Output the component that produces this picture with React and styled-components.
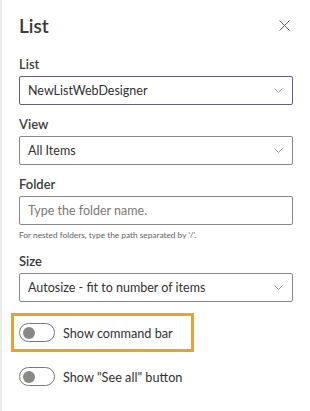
import React from "react";
import styled, { createGlobalStyle } from "styled-components";

const GlobalStyle = createGlobalStyle`
    html, body {
        margin: 0;
        padding: 0;
        background: #ffffff;
    }
    body {
        font-family: Lato, "Open Sans", sans-serif;
        color: #323130;
    }
`

const Panel = styled.aside`
    box-sizing: border-box;
    width: 310px;
    height: 411px;
    border-left: 2px solid #ececec;
    padding: 10px 17px 0 17px;
    display: flex;
    flex-direction: column;
`

const Header = styled.header`
    display: flex;
    align-items: center;
    justify-content: space-between;
    height: 30px;
    margin-bottom: 14px;
`

const Title = styled.h1`
    margin: 0;
    font-size: 19px;
    font-weight: 600;
    color: #3b3a39;
`

const CloseButton = styled.button`
    display: flex;
    align-items: center;
    justify-content: center;
    width: 24px;
    height: 24px;
    margin-right: -3px;
    padding: 0;
    border: none;
    background: none;
`

const Field = styled.div`
    display: flex;
    flex-direction: column;
    margin-bottom: 9px;
`

const Label = styled.label`
    font-size: 13px;
    font-weight: 600;
    line-height: 20px;
    margin-bottom: 2px;
    color: #3b3a39;
`

const Box = styled.div`
    box-sizing: border-box;
    height: 29px;
    display: flex;
    align-items: center;
    justify-content: space-between;
    padding: 0 9px 0 8px;
    border: 1px solid ${({ active }) => (active ? "#625f80" : "#8a8886")};
    border-radius: 2px;
    font-size: 12.5px;
    color: ${({ placeholder }) => (placeholder ? "#7a7876" : "#323130")};
`

const Hint = styled.span`
    margin-top: 4px;
    font-size: 8.3px;
    line-height: 13px;
    color: #605e5c;
`

const ToggleRow = styled.div`
    box-sizing: border-box;
    display: flex;
    align-items: center;
    gap: 8px;
    width: ${({ highlight }) => (highlight ? "183px" : "auto")};
    height: 39px;
    margin: ${({ highlight }) => (highlight ? "2px 0 0 -8px" : "5px 0 0 -8px")};
    padding-left: 5px;
    border: 3px solid ${({ highlight }) => (highlight ? "#e8a232" : "transparent")};
    font-size: 12.7px;
    color: #323130;
`

const Switch = styled.span`
    box-sizing: border-box;
    display: flex;
    align-items: center;
    width: 36px;
    height: 19px;
    padding: 0 3px;
    border: 1px solid #7a7876;
    border-radius: 10px;

    &::after {
        content: "";
        width: 12px;
        height: 12px;
        border-radius: 50%;
        background: #8a8886;
    }
`

function Chevron() {
    return (
        <svg width="9" height="5" viewBox="0 0 9 5">
            <path d="M0.5 0.5l4 4 4-4" fill="none" stroke="#a19f9d" strokeWidth="1" />
        </svg>
    )
}

function App() {
    return (
        <>
            <GlobalStyle />
            <Panel>
                <Header>
                    <Title>List</Title>
                    <CloseButton aria-label="Close">
                        <svg width="11" height="11" viewBox="0 0 11 11">
                            <path d="M0.5 0.5l10 10M10.5 0.5l-10 10" stroke="#605e5c" strokeWidth="1" />
                        </svg>
                    </CloseButton>
                </Header>

                <Field>
                    <Label>List</Label>
                    <Box active>
                        NewListWebDesigner
                        <Chevron />
                    </Box>
                </Field>

                <Field>
                    <Label>View</Label>
                    <Box>
                        All Items
                        <Chevron />
                    </Box>
                </Field>

                <Field>
                    <Label>Folder</Label>
                    <Box placeholder>Type the folder name.</Box>
                    <Hint>For nested folders, type the path separated by '/'.</Hint>
                </Field>

                <Field>
                    <Label>Size</Label>
                    <Box>
                        Autosize - fit to number of items
                        <Chevron />
                    </Box>
                </Field>

                <ToggleRow highlight>
                    <Switch />
                    Show command bar
                </ToggleRow>

                <ToggleRow>
                    <Switch />
                    Show "See all" button
                </ToggleRow>
            </Panel>
        </>
    )
}

export default App;
